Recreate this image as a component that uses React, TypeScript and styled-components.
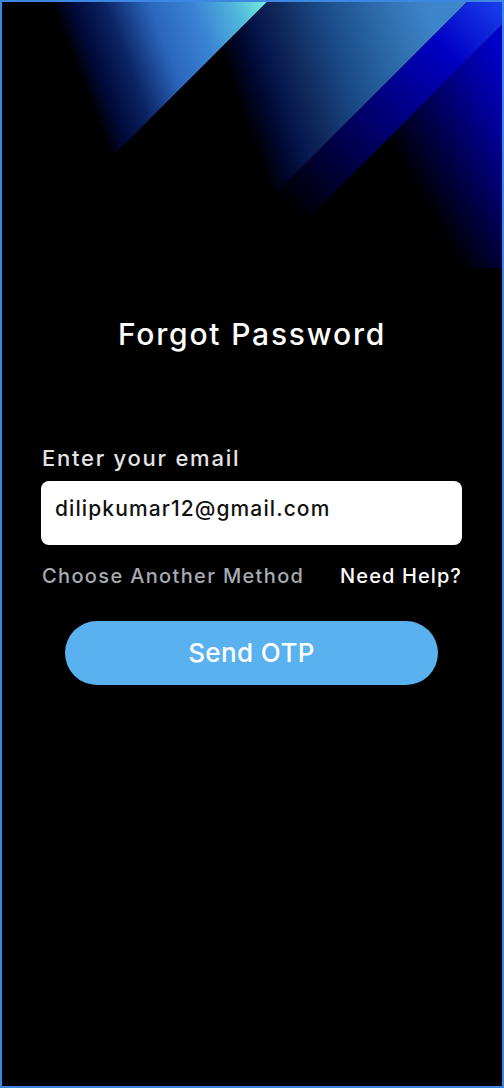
import React from "react";
import styled, { createGlobalStyle } from "styled-components";

const GlobalStyle = createGlobalStyle`
  html, body { margin: 0; padding: 0; background: #000; }
  * { box-sizing: border-box; }
`;

const Screen = styled.div`
  width: 504px;
  height: 1088px;
  border: 2px solid #3b87e2;
  background: #000;
  display: flex;
  flex-direction: column;
  font-family: Inter, "Noto Sans", sans-serif;
  overflow: hidden;
`;

const Backdrop = styled.svg`
  display: block;
  flex: none;
  width: 500px;
  height: 266px;
`;

const Title = styled.h1`
  margin: 51px 0 0;
  font-size: 30px;
  line-height: 30px;
  font-weight: 500;
  letter-spacing: 1.8px;
  color: #fff;
  text-align: center;
`;

const Form = styled.div`
  display: flex;
  flex-direction: column;
  padding: 0 40px 0 39px;
  margin-top: 98px;
`;

const Label = styled.label`
  font-size: 22px;
  line-height: 22px;
  font-weight: 500;
  letter-spacing: 1.75px;
  color: #e4e4e4;
  padding-left: 1px;
`;

const EmailInput = styled.input`
  margin-top: 12px;
  height: 64px;
  width: 100%;
  border: none;
  border-radius: 8px;
  background: #fff;
  padding: 0 14px 9px;
  font-family: Inter, "Noto Sans", sans-serif;
  font-size: 21px;
  line-height: 21px;
  font-weight: 500;
  letter-spacing: 1.1px;
  color: #111;
  outline: none;
`;

const LinkRow = styled.div`
  margin-top: 21px;
  display: flex;
  justify-content: space-between;
  padding-left: 1px;
`;

const TextLink = styled.a<{ $muted?: boolean }>`
  font-size: 20px;
  line-height: 20px;
  font-weight: 500;
  letter-spacing: ${(p) => (p.$muted ? "1.35px" : "1.1px")};
  color: ${(p) => (p.$muted ? "#a7abb3" : "#ffffff")};
  text-decoration: none;
  cursor: pointer;
`;

const SendButton = styled.button`
  align-self: center;
  margin-top: 35px;
  width: 373px;
  height: 64px;
  border: none;
  border-radius: 32px;
  background: #5ab1ef;
  color: #fff;
  font-family: Inter, "Noto Sans", sans-serif;
  font-size: 26px;
  line-height: 26px;
  font-weight: 500;
  letter-spacing: 0.4px;
  cursor: pointer;
`;

const Decoration = () => (
  <Backdrop viewBox="2 2 500 266" preserveAspectRatio="none">
    <defs>
      <linearGradient id="gA" gradientUnits="userSpaceOnUse" x1="50" y1="2" x2="238" y2="-71">
        <stop offset="0" stopColor="#000000" />
        <stop offset="0.1" stopColor="#000a3a" />
        <stop offset="0.25" stopColor="#0c2464" />
        <stop offset="0.45" stopColor="#2a66bc" />
        <stop offset="0.65" stopColor="#3a82d4" />
        <stop offset="0.85" stopColor="#52b8dc" />
        <stop offset="1" stopColor="#74ecdc" />
      </linearGradient>
      <linearGradient id="gB" gradientUnits="userSpaceOnUse" x1="272.7" y1="200" x2="473.4" y2="127">
        <stop offset="0" stopColor="#000000" />
        <stop offset="0.12" stopColor="#000830" />
        <stop offset="0.22" stopColor="#061850" />
        <stop offset="0.32" stopColor="#10285a" />
        <stop offset="0.52" stopColor="#1a4a88" />
        <stop offset="0.8" stopColor="#3070b0" />
        <stop offset="1" stopColor="#3e86cc" />
      </linearGradient>
      <linearGradient id="gC" gradientUnits="userSpaceOnUse" x1="290" y1="210" x2="500" y2="0">
        <stop offset="0" stopColor="#000000" />
        <stop offset="0.45" stopColor="#000078" />
        <stop offset="0.75" stopColor="#0000c4" />
        <stop offset="1" stopColor="#1a40ec" />
      </linearGradient>
      <linearGradient id="gD" gradientUnits="userSpaceOnUse" x1="392.5" y1="150" x2="516.9" y2="77.4">
        <stop offset="0" stopColor="#000000" />
        <stop offset="0.4" stopColor="#000058" />
        <stop offset="0.7" stopColor="#000098" />
        <stop offset="1" stopColor="#0000cc" />
      </linearGradient>
    </defs>
    <polygon points="2,2 267,2 2,267" fill="url(#gA)" />
    <polygon points="267,2 467,2 2,467 2,267" fill="url(#gB)" />
    <polygon points="467,2 525,2 2,525 2,467" fill="url(#gC)" />
    <polygon points="525,2 800,2 800,400 127,400" fill="url(#gD)" />
  </Backdrop>
);

export default function App() {
  return (
    <>
      <GlobalStyle />
      <Screen>
        <Decoration />
        <Title>Forgot Password</Title>
        <Form>
          <Label htmlFor="email">Enter your email</Label>
          <EmailInput id="email" type="email" defaultValue="dilipkumar12@gmail.com" />
          <LinkRow>
            <TextLink $muted>Choose Another Method</TextLink>
            <TextLink>Need Help?</TextLink>
          </LinkRow>
          <SendButton>Send OTP</SendButton>
        </Form>
      </Screen>
    </>
  );
}
